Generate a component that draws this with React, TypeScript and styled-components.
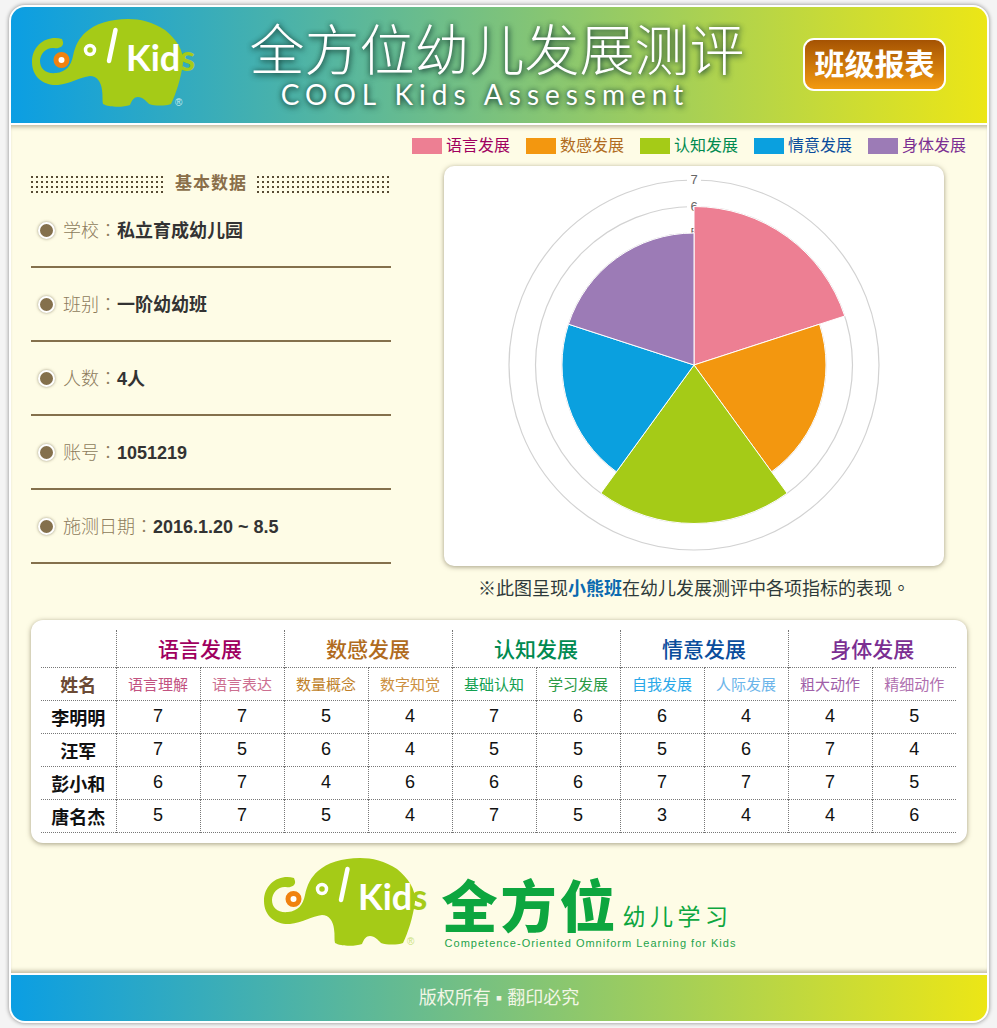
import React from "react";
import styled, { createGlobalStyle } from "styled-components";

const FONT = `"Liberation Sans", "Noto Sans CJK SC", sans-serif`;
const GREEN = "#a5cb17";
const CREAM = "#fefce6";

const domains = [
  { name: "语言发展", swatch: "#ed7f93", text: "#a0005f", value: 6, subs: [["语言理解", "#c2527f"], ["语言表达", "#cc6f90"]] },
  { name: "数感发展", swatch: "#f3970f", text: "#b06b20", value: 5, subs: [["数量概念", "#c07f28"], ["数字知觉", "#cc9040"]] },
  { name: "认知发展", swatch: "#a5cb17", text: "#008a50", value: 6, subs: [["基础认知", "#12a050"], ["学习发展", "#2a9a45"]] },
  { name: "情意发展", swatch: "#0aa0df", text: "#0a4d9c", value: 5, subs: [["自我发展", "#2aa8e8"], ["人际发展", "#6cb5ea"]] },
  { name: "身体发展", swatch: "#9c7bb6", text: "#7b2f92", value: 5, subs: [["粗大动作", "#a060a8"], ["精细动作", "#b070b0"]] },
];

const info = [
  ["学校", "私立育成幼儿园"],
  ["班别", "一阶幼幼班"],
  ["人数", "4人"],
  ["账号", "1051219"],
  ["施测日期", "2016.1.20 ~ 8.5"],
];

const students: [string, number[]][] = [
  ["李明明", [7, 7, 5, 4, 7, 6, 6, 4, 4, 5]],
  ["汪军", [7, 5, 6, 4, 5, 5, 5, 6, 7, 4]],
  ["彭小和", [6, 7, 4, 6, 6, 6, 7, 7, 7, 5]],
  ["唐名杰", [5, 7, 5, 4, 7, 5, 3, 4, 4, 6]],
];

const CX = 250;
const CY = 199;
const radius = (v: number) => (v === 7 ? 185 : v === 6 ? 158.5 : 132);

const slice = (i: number, r: number) => {
  const a0 = (i * 72 * Math.PI) / 180;
  const a1 = ((i + 1) * 72 * Math.PI) / 180;
  const p = (a: number) => `${CX + r * Math.sin(a)} ${CY - r * Math.cos(a)}`;
  return `M${CX} ${CY}L${p(a0)}A${r} ${r} 0 0 1 ${p(a1)}Z`;
};

const Logo = ({ mark }: { mark: string }) => (
  <LogoSvg viewBox="30 20 168 92">
    <path
      fill={GREEN}
      d="M62 41C47 37 32 47 32 64C32 80 45 88 58 87C70 86 80 79 90 78C97 78 101 84 102 92C103 98 102 103 103 106C108 109 122 110 130 107C132 102 134 99 138 99C143 99 146 103 149 106C155 108 165 108 171 106C176 96 181 80 183 65C184 52 176 41 165 32C153 24 140 21 128 21C110 21 95 26 86 34C79 40 75 48 73 58C71 68 66 74 56 75C46 76 40 71 40 63C40 55 47 49 54 50C58 51 64 49 63 44Z"
    />
    <circle cx="61.5" cy="62" r="5.5" fill="#fff" stroke="#f0820f" strokeWidth="5" />
    <circle cx="90" cy="52" r="4.5" fill={GREEN} stroke="#fff" strokeWidth="3.5" />
    <line x1="115.5" y1="32" x2="109" y2="63" stroke="#fff" strokeWidth="4.5" strokeLinecap="round" />
    <LogoWord x="126" y="73">Kid</LogoWord>
    <LogoTail x="179.5" y="73">s</LogoTail>
    <LogoMark x="175" y="108" fill={mark}>®</LogoMark>
  </LogoSvg>
);

export default function App() {
  return (
    <>
      <GlobalStyle />
      <Frame>
        <Header>
          <Logo mark="#cfeef0" />
          <TitleBlock>
            <Title>全方位幼儿发展测评</Title>
            <Subtitle>COOL Kids Assessment</Subtitle>
          </TitleBlock>
          <ReportBadge>班级报表</ReportBadge>
        </Header>

        <Main>
          <Legend>
            {domains.map((d) => (
              <LegendItem key={d.name} $color={d.text}>
                <Swatch $color={d.swatch} />
                {d.name}
              </LegendItem>
            ))}
          </Legend>

          <TopRow>
            <InfoColumn>
              <InfoHeading>
                <Dots />
                <InfoTitle>基本数据</InfoTitle>
                <Dots />
              </InfoHeading>
              {info.map(([k, v]) => (
                <InfoRow key={k}>
                  <Bullet />
                  <InfoText>
                    <InfoLabel>
                      {k}
                      <Centered>：</Centered>
                    </InfoLabel>
                    <InfoValue>{v}</InfoValue>
                  </InfoText>
                </InfoRow>
              ))}
            </InfoColumn>

            <ChartColumn>
              <ChartCard>
                <svg width="500" height="400" viewBox="0 0 500 400">
                  {[7, 6, 5].map((v) => (
                    <circle key={v} cx={CX} cy={CY} r={radius(v)} fill="none" stroke="#d2d2d2" strokeWidth="1.2" />
                  ))}
                  {[7, 6, 5].map((v) => (
                    <g key={v}>
                      <rect x={CX - 7} y={CY - radius(v) - 7} width="14" height="14" fill="#fff" />
                      <ChartTick x={CX} y={CY - radius(v) + 4}>
                        {v}
                      </ChartTick>
                    </g>
                  ))}
                  {domains.map((d, i) => (
                    <path key={d.name} d={slice(i, radius(d.value))} fill={d.swatch} stroke="#fff" strokeWidth="1" />
                  ))}
                </svg>
              </ChartCard>
              <Note>
                ※此图呈现<ClassName>小熊班</ClassName>在幼儿发展测评中各项指标的表现<Centered>。</Centered>
              </Note>
            </ChartColumn>
          </TopRow>

          <TableCard>
            <ScoreTable>
              <colgroup>
                <NameCol />
                {Array.from({ length: 10 }, (_, i) => (
                  <ScoreCol key={i} />
                ))}
              </colgroup>
              <thead>
                <tr>
                  <BlankCell />
                  {domains.map((d) => (
                    <DomainCell key={d.name} colSpan={2} $color={d.text}>
                      {d.name}
                    </DomainCell>
                  ))}
                </tr>
                <tr>
                  <NameHead>姓名</NameHead>
                  {domains.flatMap((d) =>
                    d.subs.map(([s, c]) => (
                      <SubCell key={s} $color={c}>
                        {s}
                      </SubCell>
                    ))
                  )}
                </tr>
              </thead>
              <tbody>
                {students.map(([name, scores]) => (
                  <tr key={name}>
                    <NameCell>{name}</NameCell>
                    {scores.map((n, i) => (
                      <ScoreCell key={i}>{n}</ScoreCell>
                    ))}
                  </tr>
                ))}
              </tbody>
            </ScoreTable>
          </TableCard>

          <Brand>
            <Logo mark="#c9e27a" />
            <BrandText>
              <BrandTop>
                <BrandBig>全方位</BrandBig>
                <BrandSmall>幼儿学习</BrandSmall>
              </BrandTop>
              <BrandCaption>Competence-Oriented Omniform Learning for Kids</BrandCaption>
            </BrandText>
          </Brand>
        </Main>

        <Footer>版权所有 ▪ 翻印必究</Footer>
      </Frame>
    </>
  );
}

const GlobalStyle = createGlobalStyle`
  html, body {
    margin: 0;
    background: #f4f4f4;
  }
`;

const Frame = styled.div`
  box-sizing: border-box;
  width: 980px;
  margin: 5px 0 6px 9px;
  border: 2px solid #fff;
  border-radius: 16px;
  overflow: hidden;
  background: ${CREAM};
  box-shadow: 0 0 4px rgba(0, 0, 0, 0.45);
  font-family: ${FONT};
`;

const Header = styled.header`
  box-sizing: border-box;
  height: 118px;
  display: grid;
  grid-template-columns: 168px 1fr auto;
  align-items: center;
  padding: 0 41px 2px 19px;
  border-bottom: 2px solid #fff;
  background: linear-gradient(90deg, #0b9ee3, #ece616);
`;

const LogoSvg = styled.svg`
  display: block;
  width: 168px;
  height: 92px;
`;

const LogoWord = styled.text`
  font-family: Lato, sans-serif;
  font-weight: 700;
  font-size: 36px;
  fill: #fff;
`;

const LogoTail = styled.text`
  font-family: Lato, sans-serif;
  font-weight: 700;
  font-size: 36px;
  fill: ${GREEN};
`;

const LogoMark = styled.text`
  font-family: "Liberation Sans", sans-serif;
  font-size: 10px;
`;

const TitleBlock = styled.div`
  padding-right: 7px;
  text-align: center;
  color: #fff;
  text-shadow: 1px 2px 6px rgba(20, 60, 50, 0.85), 0 0 5px rgba(20, 60, 50, 0.6);
`;

const Title = styled.div`
  height: 60px;
  font-family: "Noto Sans CJK SC", sans-serif;
  font-size: 55px;
  font-weight: 300;
  line-height: 56px;
`;

const Subtitle = styled.div`
  margin-right: 24px;
  font-family: Lato, sans-serif;
  font-size: 28px;
  font-weight: 400;
  letter-spacing: 6px;
  line-height: 32px;
`;

const ReportBadge = styled.div`
  box-sizing: border-box;
  width: 143px;
  height: 53px;
  margin-top: 1px;
  border: 2px solid #fff;
  border-radius: 11px;
  background: linear-gradient(180deg, #a55303, #f39a10);
  color: #fff;
  font-size: 30px;
  font-weight: 700;
  line-height: 49px;
  text-align: center;
`;

const Main = styled.main`
  padding: 13px 20px 23px;
  box-shadow: inset 0 5px 4px -3px rgba(90, 80, 50, 0.4), inset 0 -5px 4px -3px rgba(90, 80, 50, 0.4);
`;

const Legend = styled.div`
  display: flex;
  justify-content: flex-end;
  gap: 16px;
  padding-right: 1px;
`;

const LegendItem = styled.div<{ $color: string }>`
  display: flex;
  align-items: center;
  gap: 4px;
  height: 16px;
  font-size: 16px;
  line-height: 16px;
  color: ${(p) => p.$color};
`;

const Swatch = styled.span<{ $color: string }>`
  width: 30px;
  height: 16px;
  background: ${(p) => p.$color};
`;

const TopRow = styled.div`
  display: grid;
  grid-template-columns: 360px 500px;
  column-gap: 53px;
  margin-top: 12px;
`;

const InfoColumn = styled.section`
  padding-top: 9px;
`;

const InfoHeading = styled.div`
  display: flex;
  align-items: flex-end;
  height: 18px;
  margin-bottom: 1px;
`;

const Dots = styled.span`
  width: 132px;
  height: 17px;
  background-image: linear-gradient(to right, transparent 2px, ${CREAM} 2px),
    linear-gradient(to bottom, #574a33 2px, transparent 2px);
  background-size: 5px 5px;
`;

const InfoTitle = styled.h2`
  align-self: center;
  margin: 0 10px 0 12px;
  font-size: 17px;
  font-weight: 700;
  letter-spacing: 1px;
  line-height: 18px;
  color: #8a6f4a;
`;

const InfoRow = styled.div`
  box-sizing: border-box;
  height: 74px;
  display: flex;
  align-items: center;
  padding-left: 7px;
  border-bottom: 2px solid #84704c;
  font-size: 18px;
`;

const InfoText = styled.div`
  display: flex;
  align-items: baseline;
  margin-bottom: 3px;
`;

const Bullet = styled.span`
  box-sizing: border-box;
  width: 17px;
  height: 17px;
  margin-right: 8px;
  border: 2px solid #fff;
  border-radius: 50%;
  background: #84704c;
  box-shadow: 0 0 3px rgba(90, 80, 50, 0.6);
`;

const InfoLabel = styled.span`
  color: #8d7b5c;
  font-weight: 300;
`;

const Centered = styled.span`
  font-family: "Noto Sans CJK TC", sans-serif;
`;

const InfoValue = styled.span`
  color: #333;
  font-weight: 700;
`;

const ChartColumn = styled.section`
  display: flex;
  flex-direction: column;
`;

const ChartCard = styled.div`
  height: 400px;
  border-radius: 10px;
  background: #fff;
  box-shadow: 0 1px 5px rgba(90, 80, 50, 0.55);

  svg {
    display: block;
  }
`;

const ChartTick = styled.text`
  font-family: "Liberation Sans", sans-serif;
  font-size: 13px;
  fill: #666;
  text-anchor: middle;
`;

const Note = styled.p`
  height: 24px;
  margin: 10px 0 0;
  font-size: 18px;
  line-height: 22px;
  text-align: center;
  color: #2e3a3a;
`;

const ClassName = styled.span`
  font-weight: 700;
  color: #0a6ab0;
`;

const TableCard = styled.section`
  margin-top: 20px;
  padding: 10px;
  border-radius: 12px;
  background: #fff;
  box-shadow: 0 1px 5px rgba(90, 80, 50, 0.55);
`;

const ScoreTable = styled.table`
  width: 915px;
  table-layout: fixed;
  border-collapse: collapse;
  border-bottom: 1px dotted #777;
`;

const NameCol = styled.col`
  width: 75px;
`;

const ScoreCol = styled.col`
  width: 84px;
`;

const Cell = styled.td`
  box-sizing: border-box;
  height: 33px;
  padding: 0;
  border-top: 1px dotted #777;
  border-left: 1px dotted #777;
  text-align: center;
  font-size: 18px;
  color: #111;

  &:first-child {
    border-left: 0;
  }
`;

const BlankCell = styled(Cell).attrs({ as: "th" })`
  height: 37px;
  border-top: 0;
`;

const DomainCell = styled(Cell).attrs({ as: "th" })<{ $color: string }>`
  height: 37px;
  border-top: 0;
  font-size: 21px;
  font-weight: 500;
  color: ${(p) => p.$color};
`;

const NameHead = styled(Cell).attrs({ as: "th" })`
  font-weight: 700;
  color: #6b4a35;
`;

const SubCell = styled(Cell).attrs({ as: "th" })<{ $color: string }>`
  font-size: 15px;
  font-weight: 400;
  color: ${(p) => p.$color};
`;

const NameCell = styled(Cell)`
  font-weight: 700;
`;

const ScoreCell = styled(Cell)``;

const Brand = styled.div`
  display: flex;
  justify-content: center;
  align-items: flex-start;
  gap: 12px;
  margin-top: 14px;
`;

const BrandText = styled.div`
  padding-top: 20px;
`;

const BrandTop = styled.div`
  display: flex;
  align-items: flex-end;
  gap: 4px;
  height: 52px;
`;

const BrandBig = styled.span`
  font-family: "Noto Sans CJK SC", sans-serif;
  font-size: 56px;
  font-weight: 900;
  letter-spacing: 3px;
  line-height: 52px;
  color: #0da63f;
`;

const BrandSmall = styled.span`
  position: relative;
  top: -1px;
  font-family: "Noto Sans CJK SC", sans-serif;
  font-size: 23px;
  line-height: 26px;
  letter-spacing: 4.5px;
  color: #0da63f;
`;

const BrandCaption = styled.div`
  margin-top: 8px;
  padding-left: 3px;
  font-size: 11px;
  line-height: 13px;
  letter-spacing: 1px;
  white-space: nowrap;
  color: #1da34b;
`;

const Footer = styled.footer`
  height: 46px;
  border-top: 2px solid #fff;
  background: linear-gradient(90deg, #0b9ee3, #ece616);
  color: #f2f6e6;
  font-size: 18px;
  line-height: 46px;
  text-align: center;
`;
